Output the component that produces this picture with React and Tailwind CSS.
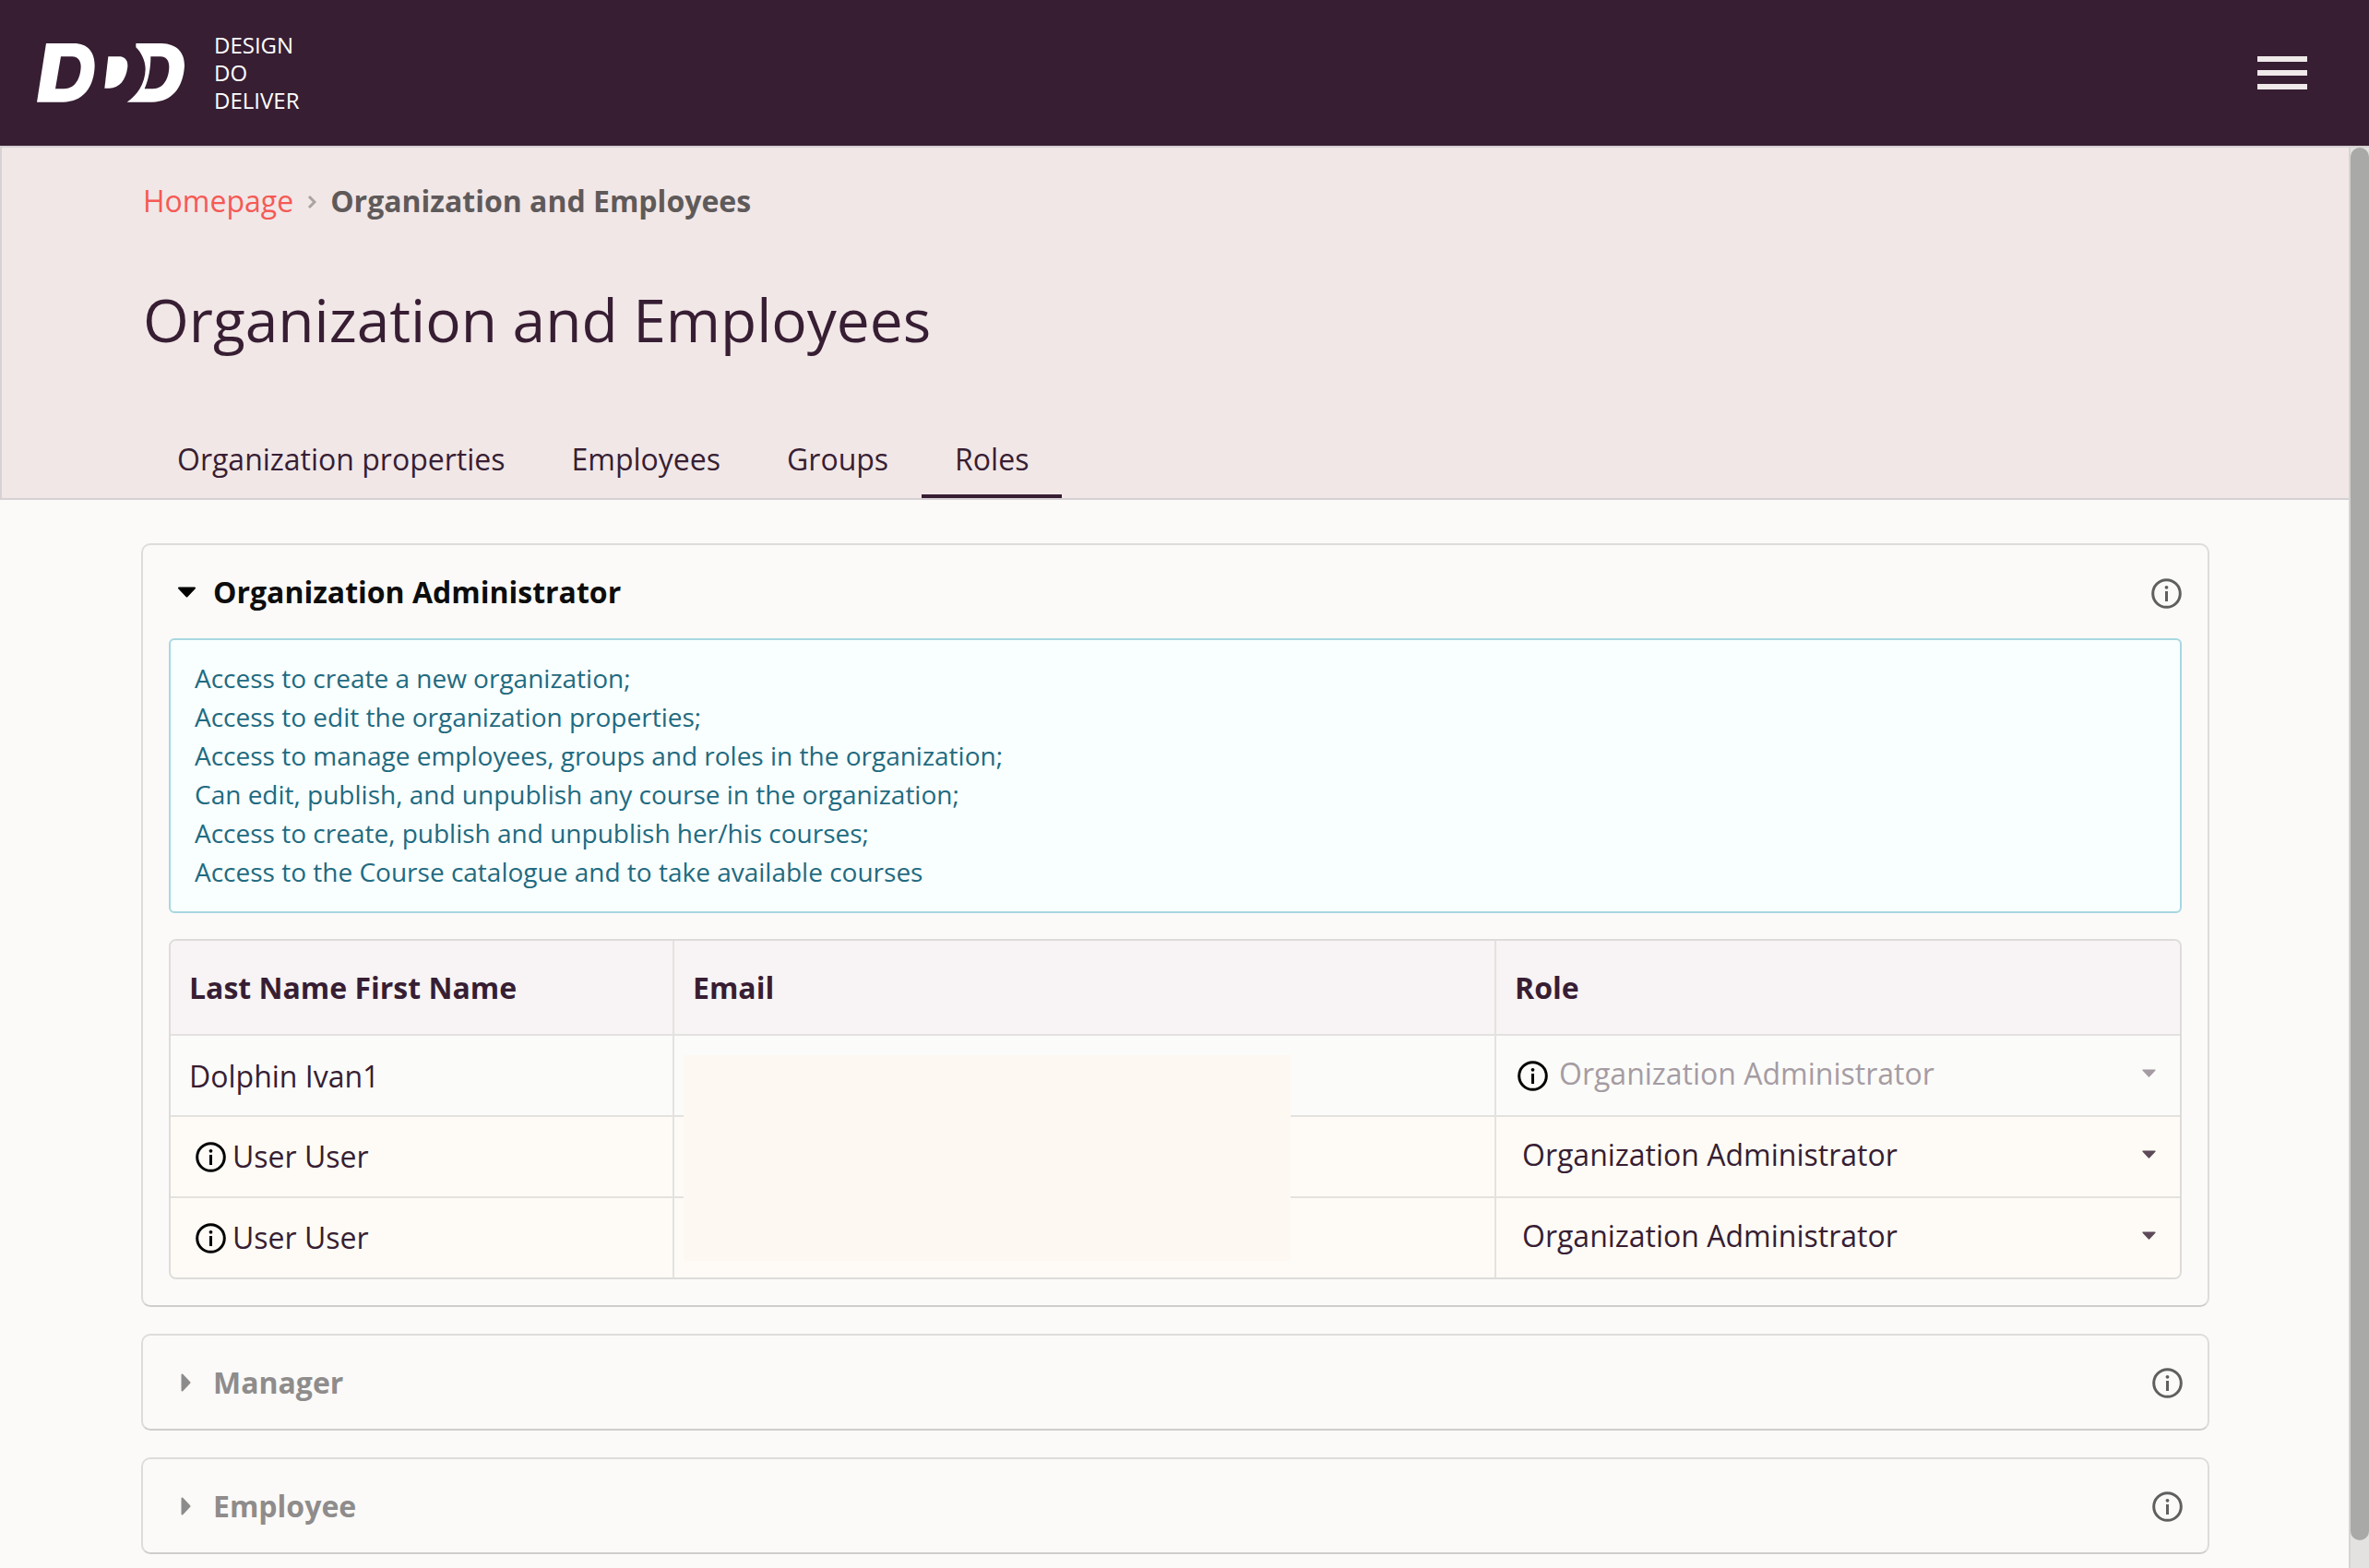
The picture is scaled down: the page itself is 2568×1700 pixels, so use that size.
function InfoIcon({ className }) {
  return (
    <svg viewBox="0 0 33 33" fill="none" className={className}>
      <circle cx="16.5" cy="16.5" r="14.8" stroke="currentColor" strokeWidth="3" />
      <circle cx="16.5" cy="9.8" r="1.9" fill="currentColor" />
      <rect x="15" y="14" width="3" height="11" fill="currentColor" />
    </svg>
  );
}

function Logo() {
  return (
    <svg viewBox="120 142 480 192" className="w-[160px] h-[64px] shrink-0" fill="#fff">
      <path fillRule="evenodd" d="M120 333 L150 142 L240 142 C285 142 308 170 308 215 C306 285 270 333 205 333 Z M198 185 L180 290 L208 290 C245 290 262 255 263 218 C263 198 252 185 235 185 Z" />
      <path d="M352 185 L392 185 C408 187 416 200 415 218 C410 262 388 288 355 288 L340 288 Z" />
      <path fillRule="evenodd" d="M442 142 L525 142 C575 144 600 170 600 215 C596 285 560 333 495 333 L413 333 C445 310 472 275 473 225 C473 200 460 172 442 155 Z M490 185 C490 225 483 260 470 290 L498 290 C532 290 550 255 550 218 C550 198 540 185 522 185 Z" />
    </svg>
  );
}

function CaretDown({ className }) {
  return (
    <svg viewBox="0 0 20 12" className={className}>
      <path d="M1.5 1.5 H18.5 L10 10.5 Z" fill="currentColor" stroke="currentColor" strokeWidth="2" strokeLinejoin="round" />
    </svg>
  );
}

function CaretRight() {
  return (
    <svg viewBox="0 0 11 20" className="w-[11px] h-[20px] text-[#8c8c8c]">
      <path d="M1.5 1.5 V18.5 L9.5 10 Z" fill="currentColor" stroke="currentColor" strokeWidth="2" strokeLinejoin="round" />
    </svg>
  );
}

function CollapsedCard({ title }) {
  return (
    <div className="h-[105px] rounded-[10px] border-2 border-[#dedcda] border-b-[#cfcdcb] flex items-center pl-[41px] pr-[27px] mb-[29px]">
      <CaretRight />
      <div className="ml-[24px] flex-1 text-[#8f8c8c] font-bold text-[32px] leading-none">{title}</div>
      <InfoIcon className="w-[33px] h-[33px] text-[#5f5f5f] mt-[1px]" />
    </div>
  );
}

const lines = [
  "Access to create a new organization;",
  "Access to edit the organization properties;",
  "Access to manage employees, groups and roles in the organization;",
  "Can edit, publish, and unpublish any course in the organization;",
  "Access to create, publish and unpublish her/his courses;",
  "Access to the Course catalogue and to take available courses",
];

function Row({ first, last, highlighted, name, disabled }) {
  const bg = highlighted ? "bg-[#fefbf6]" : "bg-[#fbfbf9]";
  return (
    <div className={`flex ${last ? "h-[86px]" : "h-[88px] border-b-2 border-[#e4e2e0]"} ${bg}`}>
      <div className="w-[546px] shrink-0 border-r-2 border-[#e4e2e0] flex items-center">
        {first ? (
          <span className="pl-[20px] pt-[2px]">{name}</span>
        ) : (
          <span className="pl-[27px] flex items-center gap-[7px]">
            <InfoIcon className="w-[33px] h-[33px] text-black" />
            {name}
          </span>
        )}
      </div>
      <div className="w-[891px] shrink-0 border-r-2 border-[#e4e2e0]" />
      <div className="flex-1 flex items-center pb-[4px] pr-[26px] min-w-0">
        {disabled ? (
          <div className="flex items-center flex-1 pl-[23px] gap-[12px] text-[#a59ca3]">
            <InfoIcon className="w-[33px] h-[33px] text-black mt-[4px]" />
            <span className="flex-1">Organization Administrator</span>
            <CaretDown className="w-[15px] h-[9px] text-[#a59ca3] -mt-[2px]" />
          </div>
        ) : (
          <div className="flex items-center flex-1 pl-[28px]">
            <span className="flex-1">Organization Administrator</span>
            <CaretDown className="w-[15px] h-[9px] text-[#5d4a59] -mt-[2px]" />
          </div>
        )}
      </div>
    </div>
  );
}

export default function App() {
  return (
    <div className="relative h-[1700px] overflow-hidden bg-[#fbfaf8] text-[#371e33] [font-family:'Open_Sans',sans-serif]">
      <header className="h-[158px] bg-[#371e33] flex items-center pl-[40px] pr-[67px]">
        <Logo />
        <div className="ml-[32px] text-white text-[24px] leading-[30px]">
          <div>DESIGN</div>
          <div>DO</div>
          <div>DELIVER</div>
        </div>
        <div className="ml-auto flex flex-col gap-[9px]">
          <div className="w-[54px] h-[6px] bg-[#efe9e9]" />
          <div className="w-[54px] h-[6px] bg-[#efe9e9]" />
          <div className="w-[54px] h-[6px] bg-[#efe9e9]" />
        </div>
      </header>

      <section className="h-[384px] bg-[#f1e7e7] border-t-2 border-l-2 border-b-2 border-[#d6d1d3] pl-[153px] flex flex-col">
        <div className="flex items-center mt-[36px] text-[32px] leading-[44px]">
          <span className="text-[#f55a55]">Homepage</span>
          <svg viewBox="0 0 10 16" className="w-[10px] h-[16px] ml-[15px] mr-[15px] mt-[2px]" fill="none">
            <path d="M2 2 L8 8 L2 14" stroke="#a9a3a3" strokeWidth="3" />
          </svg>
          <span className="font-bold text-[#5f5a5a]">Organization and Employees</span>
        </div>
        <h1 className="mt-[63px] text-[64px] leading-[88px] font-normal">Organization and Employees</h1>
        <nav className="mt-auto flex text-[32px] leading-none ml-[1px]">
          <div className="px-[36px] h-[72px] pt-[14px]">Organization properties</div>
          <div className="px-[36px] h-[72px] pt-[14px]">Employees</div>
          <div className="px-[36px] h-[72px] pt-[14px]">Groups</div>
          <div className="px-[36px] h-[72px] pt-[14px] border-b-4 border-[#371e33]">Roles</div>
        </nav>
      </section>

      <main className="pt-[47px] pl-[153px] w-[2395px]">
        <div className="rounded-[10px] border-2 border-[#dedcda] border-b-[#cfcdcb] h-[828px] mb-[29px] px-[28px]">
          <div className="h-[101px] flex items-center">
            <CaretDown className="w-[21px] h-[12px] text-black ml-[9px]" />
            <div className="ml-[18px] flex-1 text-[32px] font-bold text-[#0d0d0d] leading-none">Organization Administrator</div>
            <InfoIcon className="w-[33px] h-[33px] text-[#5f5f5f] mt-[3px]" />
          </div>
          <div className="rounded-[6px] border-2 border-[#a7d7e0] bg-[#f8fffe] pl-[26px] pt-[20px] h-[298px] text-[28px] leading-[42px] text-[#226a80]">
            {lines.map((l) => (
              <div key={l}>{l}</div>
            ))}
          </div>
          <div className="relative mt-[28px] rounded-[8px] border-2 border-[#dedcda] text-[32px] overflow-hidden">
            <div className="flex h-[103px] bg-[#f8f3f4] border-b-2 border-[#e4e2e0] font-bold">
              <div className="w-[546px] shrink-0 border-r-2 border-[#e4e2e0] flex items-center pl-[20px]">Last Name First Name</div>
              <div className="w-[891px] shrink-0 border-r-2 border-[#e4e2e0] flex items-center pl-[20px]">Email</div>
              <div className="flex-1 flex items-center pl-[20px]">Role</div>
            </div>
            <Row first disabled name="Dolphin Ivan1" />
            <Row highlighted name="User User" />
            <Row highlighted last name="User User" />
            <div className="absolute left-[556px] top-[124px] w-[658px] h-[223px] bg-[#fdf8f2]" />
          </div>
        </div>
        <CollapsedCard title="Manager" />
        <CollapsedCard title="Employee" />
      </main>

      <div className="absolute top-[160px] right-0 bottom-0 w-[22px] bg-[#e3e2e0] border-l-2 border-[#d6d3d2]">
        <div className="h-[1510px] bg-[#a9a9a7] rounded-[10px]" />
      </div>
    </div>
  );
}
